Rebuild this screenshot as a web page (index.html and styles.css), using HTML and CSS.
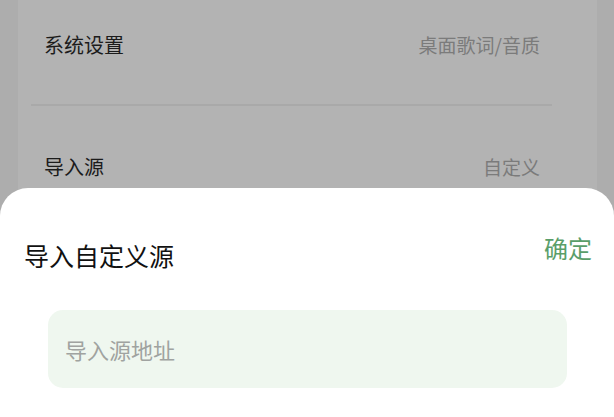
FILE: index.html
```html
<!DOCTYPE html>
<html lang="zh-CN">
<head>
<meta charset="utf-8">
<title>导入自定义源</title>
<link rel="stylesheet" href="styles.css">
</head>
<body>
<div class="page">
  <div class="card">
    <div class="row row-first">
      <span class="label">系统设置</span>
      <span class="value">桌面歌词/音质</span>
    </div>
    <div class="divider"></div>
    <div class="row row-second">
      <span class="label">导入源</span>
      <span class="value">自定义</span>
    </div>
  </div>
</div>
<div class="sheet">
  <div class="sheet-head">
    <span class="sheet-title">导入自定义源</span>
    <span class="sheet-ok">确定</span>
  </div>
  <div class="input-box">
    <span class="placeholder">导入源地址</span>
  </div>
</div>
</body>
</html>
```
FILE: styles.css
```css
* { box-sizing: border-box; }
html, body {
  margin: 0;
  padding: 0;
  width: 614px;
  height: 417px;
  overflow: hidden;
  background: #adadad;
  font-family: "Noto Sans CJK SC", "Noto Sans", sans-serif;
}
.page {
  padding: 0 17px 0 18px;
  height: 417px;
}
.card {
  background: #b3b3b3;
  height: 417px;
  padding: 0 45px 0 13px;
}
.row {
  display: flex;
  justify-content: space-between;
  align-items: center;
  padding: 0 12px 0 13px;
}
.row-first { height: 89px; margin-bottom: 15px; }
.row-second { height: 120px; }
.label {
  font-size: 20px;
  color: #1c1c1c;
}
.value {
  font-size: 19px;
  color: #7b7b7b;
}
.divider {
  height: 2px;
  background: #a9a9a9;
}
.sheet {
  position: absolute;
  left: 0;
  right: 0;
  bottom: 0;
  height: 229px;
  background: #ffffff;
  border-radius: 28px 28px 0 0;
}
.sheet-head {
  display: flex;
  justify-content: space-between;
  align-items: flex-start;
  padding: 0 22px 0 24px;
}
.sheet-title {
  font-size: 25px;
  line-height: 30px;
  margin-top: 52px;
  color: #111111;
}
.sheet-ok {
  font-size: 24px;
  line-height: 30px;
  margin-top: 45px;
  color: #5a9e69;
}
.input-box {
  margin: 40px 47px 0 48px;
  height: 78px;
  border-radius: 15px;
  background: #eff7ef;
  display: flex;
  align-items: center;
  padding-left: 17px;
}
.placeholder {
  font-size: 22px;
  color: #a0a3a0;
}
```
